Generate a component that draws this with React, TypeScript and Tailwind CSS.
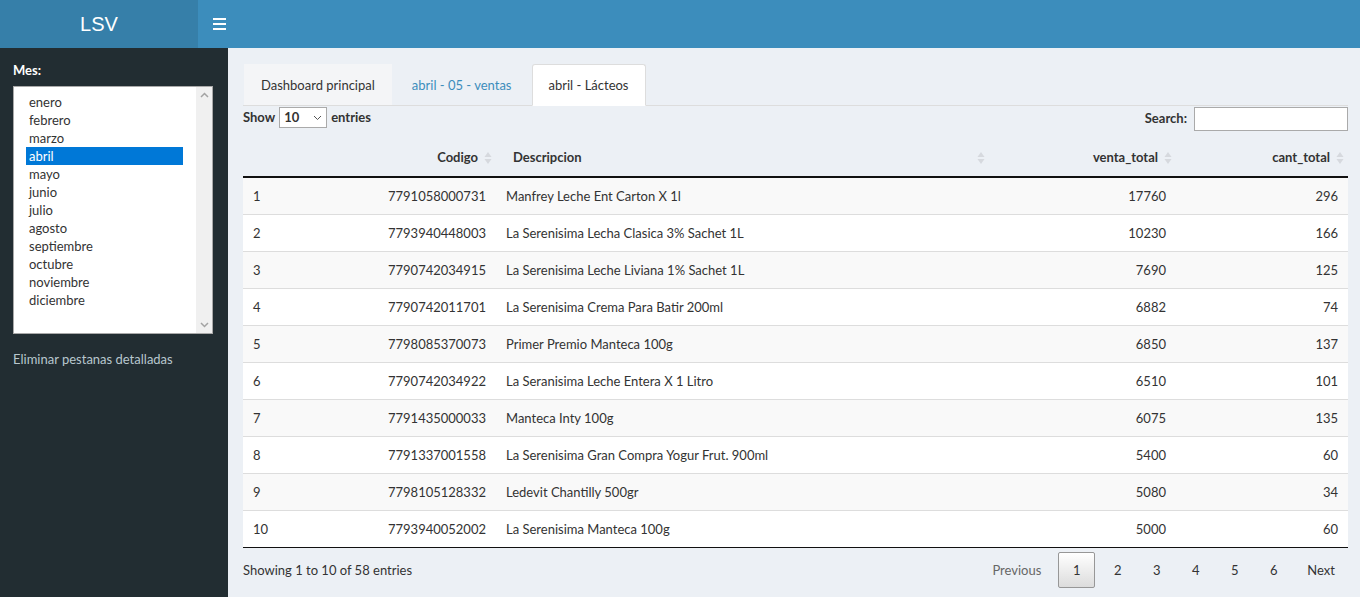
import React from "react";

const months = [
  "enero",
  "febrero",
  "marzo",
  "abril",
  "mayo",
  "junio",
  "julio",
  "agosto",
  "septiembre",
  "octubre",
  "noviembre",
  "diciembre",
];

const rows = [
  ["1", "7791058000731", "Manfrey Leche Ent Carton X 1l", "17760", "296"],
  ["2", "7793940448003", "La Serenisima Lecha Clasica 3% Sachet 1L", "10230", "166"],
  ["3", "7790742034915", "La Serenisima Leche Liviana 1% Sachet 1L", "7690", "125"],
  ["4", "7790742011701", "La Serenisima Crema Para Batir 200ml", "6882", "74"],
  ["5", "7798085370073", "Primer Premio Manteca 100g", "6850", "137"],
  ["6", "7790742034922", "La Seranisima Leche Entera X 1 Litro", "6510", "101"],
  ["7", "7791435000033", "Manteca Inty 100g", "6075", "135"],
  ["8", "7791337001558", "La Serenisima Gran Compra Yogur Frut. 900ml", "5400", "60"],
  ["9", "7798105128332", "Ledevit Chantilly 500gr", "5080", "34"],
  ["10", "7793940052002", "La Serenisima Manteca 100g", "5000", "60"],
];

// small up/down arrows used by the sortable headers
function SortIcon() {
  return (
    <svg width="8" height="14" viewBox="0 0 8 14" className="absolute right-[4px] top-1/2 -translate-y-1/2">
      <path d="M4 1 L7.5 6 L0.5 6 Z" fill="#d6d9de" />
      <path d="M4 13 L7.5 8 L0.5 8 Z" fill="#d6d9de" />
    </svg>
  );
}

export default function App() {
  return (
    <div
      className="w-[1360px] h-[597px] overflow-hidden flex flex-col text-[13px] text-[#333]"
      style={{ fontFamily: "Lato, 'Liberation Sans', sans-serif" }}
    >
      {/* ---------- Header ---------- */}
      <header className="flex h-[48px] shrink-0 bg-[#3c8dbc]">
        <div
          className="w-[198px] bg-[#367fa9] flex items-center justify-center text-white text-[20px]"
          style={{ fontFamily: "'Liberation Sans', Arial, sans-serif" }}
        >
          LSV
        </div>
        <button className="w-[28px] flex flex-col justify-center items-end gap-[3px]">
          <span className="block w-[13px] h-[2px] bg-white" />
          <span className="block w-[13px] h-[2px] bg-white" />
          <span className="block w-[13px] h-[2px] bg-white" />
        </button>
      </header>

      <div className="flex flex-1">
        {/* ---------- Sidebar ---------- */}
        <aside className="w-[228px] bg-[#222d32] px-[13px] pt-[14px]">
          <p className="text-white font-bold leading-[16px] mb-[8px]">Mes:</p>
          <div className="w-[200px] h-[248px] bg-white border border-[#a9a9a9] flex">
            <ul className="flex-1 pt-[6px] pl-[12px] pr-[13px]">
              {months.map((m) => (
                <li
                  key={m}
                  className={
                    m === "abril"
                      ? "h-[18px] leading-[18px] pl-[3px] bg-[#0078d7] text-white"
                      : "h-[18px] leading-[18px] pl-[3px] text-[#333]"
                  }
                >
                  {m}
                </li>
              ))}
            </ul>
            <div className="w-[16px] bg-[#f0f0f0] flex flex-col justify-between items-center py-[5px]">
              <svg width="9" height="6" viewBox="0 0 9 6">
                <path d="M1 5 L4.5 1.5 L8 5" stroke="#a3a3a3" strokeWidth="1.5" fill="none" />
              </svg>
              <svg width="9" height="6" viewBox="0 0 9 6">
                <path d="M1 1 L4.5 4.5 L8 1" stroke="#a3a3a3" strokeWidth="1.5" fill="none" />
              </svg>
            </div>
          </div>
          <p className="mt-[16px] text-[#b8c7ce]">Eliminar pestanas detalladas</p>
        </aside>

        {/* ---------- Content ---------- */}
        <main className="flex-1 bg-[#ecf0f5] pl-[15px] pr-[12px] pt-[16px]">
          {/* Tabs */}
          <div className="flex items-end h-[42px] border-b border-[#ddd]">
            <div className="h-[41px] px-[17px] pt-[2px] flex items-center bg-[#f4f5f7] ml-[1px] mr-[2px]">
              Dashboard principal
            </div>
            <div className="h-[41px] px-[18px] pt-[2px] flex items-center text-[#3c8dbc] mr-[2px]">
              abril - 05 - ventas
            </div>
            <div className="h-[42px] -mb-[1px] px-[16px] pt-[2px] flex items-center bg-white border border-[#ddd] border-b-white rounded-t-[3px]">
              abril - Lácteos
            </div>
          </div>

          {/* Show entries / search */}
          <div className="flex justify-between items-start h-[34px]">
            <div className="flex items-center mt-[1px] font-bold gap-[4px]">
              <span>Show</span>
              <div className="w-[48px] h-[21px] border border-[#aaa] bg-white flex items-center justify-between px-[4px]">
                <span>10</span>
                <svg width="9" height="6" viewBox="0 0 9 6">
                  <path d="M1 1 L4.5 4.5 L8 1" stroke="#555" strokeWidth="1" fill="none" />
                </svg>
              </div>
              <span>entries</span>
            </div>
            <div className="flex items-center gap-[7px] mt-[1px] font-bold">
              <span>Search:</span>
              <div className="w-[154px] h-[24px] bg-white border border-[#aaa]" />
            </div>
          </div>

          {/* Table */}
          <table className="w-full border-collapse table-fixed">
            <colgroup>
              <col className="w-[100px]" />
              <col className="w-[153px]" />
              <col className="w-[493px]" />
              <col className="w-[187px]" />
              <col />
            </colgroup>
            <thead>
              <tr className="h-[37px] border-b-2 border-[#111] font-bold">
                <th className="relative pb-[1px]" />
                <th className="relative text-right pr-[18px] pb-[1px]">
                  Codigo
                  <SortIcon />
                </th>
                <th className="relative text-left pl-[17px] pb-[1px]">
                  Descripcion
                  <SortIcon />
                </th>
                <th className="relative text-right pr-[18px] pb-[1px]">
                  venta_total
                  <SortIcon />
                </th>
                <th className="relative text-right pr-[18px] pb-[1px]">
                  cant_total
                  <SortIcon />
                </th>
              </tr>
            </thead>
            <tbody>
              {rows.map((r, i) => (
                <tr
                  key={r[0]}
                  className={
                    i % 2 === 0
                      ? "h-[37px] bg-[#f9f9f9] border-t border-[#ddd]"
                      : "h-[37px] bg-white border-t border-[#ddd]"
                  }
                >
                  <td className="pl-[10px] pt-[2px]">{r[0]}</td>
                  <td className="text-right pr-[10px] pt-[2px]">{r[1]}</td>
                  <td className="pl-[10px] pt-[2px]">{r[2]}</td>
                  <td className="text-right pr-[10px] pt-[2px]">{r[3]}</td>
                  <td className="text-right pr-[10px] pt-[2px]">{r[4]}</td>
                </tr>
              ))}
              <tr className="border-t border-[#111]" />
            </tbody>
          </table>

          {/* Footer */}
          <div className="flex justify-between items-center mt-[5px]">
            <span className="pt-[2px]">Showing 1 to 10 of 58 entries</span>
            <div className="flex items-center pl-[2px]">
              <span className="px-[14px] pt-[2px] text-[#666]">Previous</span>
              <span className="w-[37px] h-[36px] mx-[3px] pt-[2px] flex items-center justify-center border border-[#979797] rounded-[2px] bg-gradient-to-b from-white to-[#dcdcdc]">
                1
              </span>
              <span className="w-[39px] pt-[2px] text-center">2</span>
              <span className="w-[39px] pt-[2px] text-center">3</span>
              <span className="w-[39px] pt-[2px] text-center">4</span>
              <span className="w-[39px] pt-[2px] text-center">5</span>
              <span className="w-[39px] pt-[2px] text-center">6</span>
              <span className="pl-[14px] pr-[13px] pt-[2px]">Next</span>
            </div>
          </div>
        </main>
      </div>
    </div>
  );
}
